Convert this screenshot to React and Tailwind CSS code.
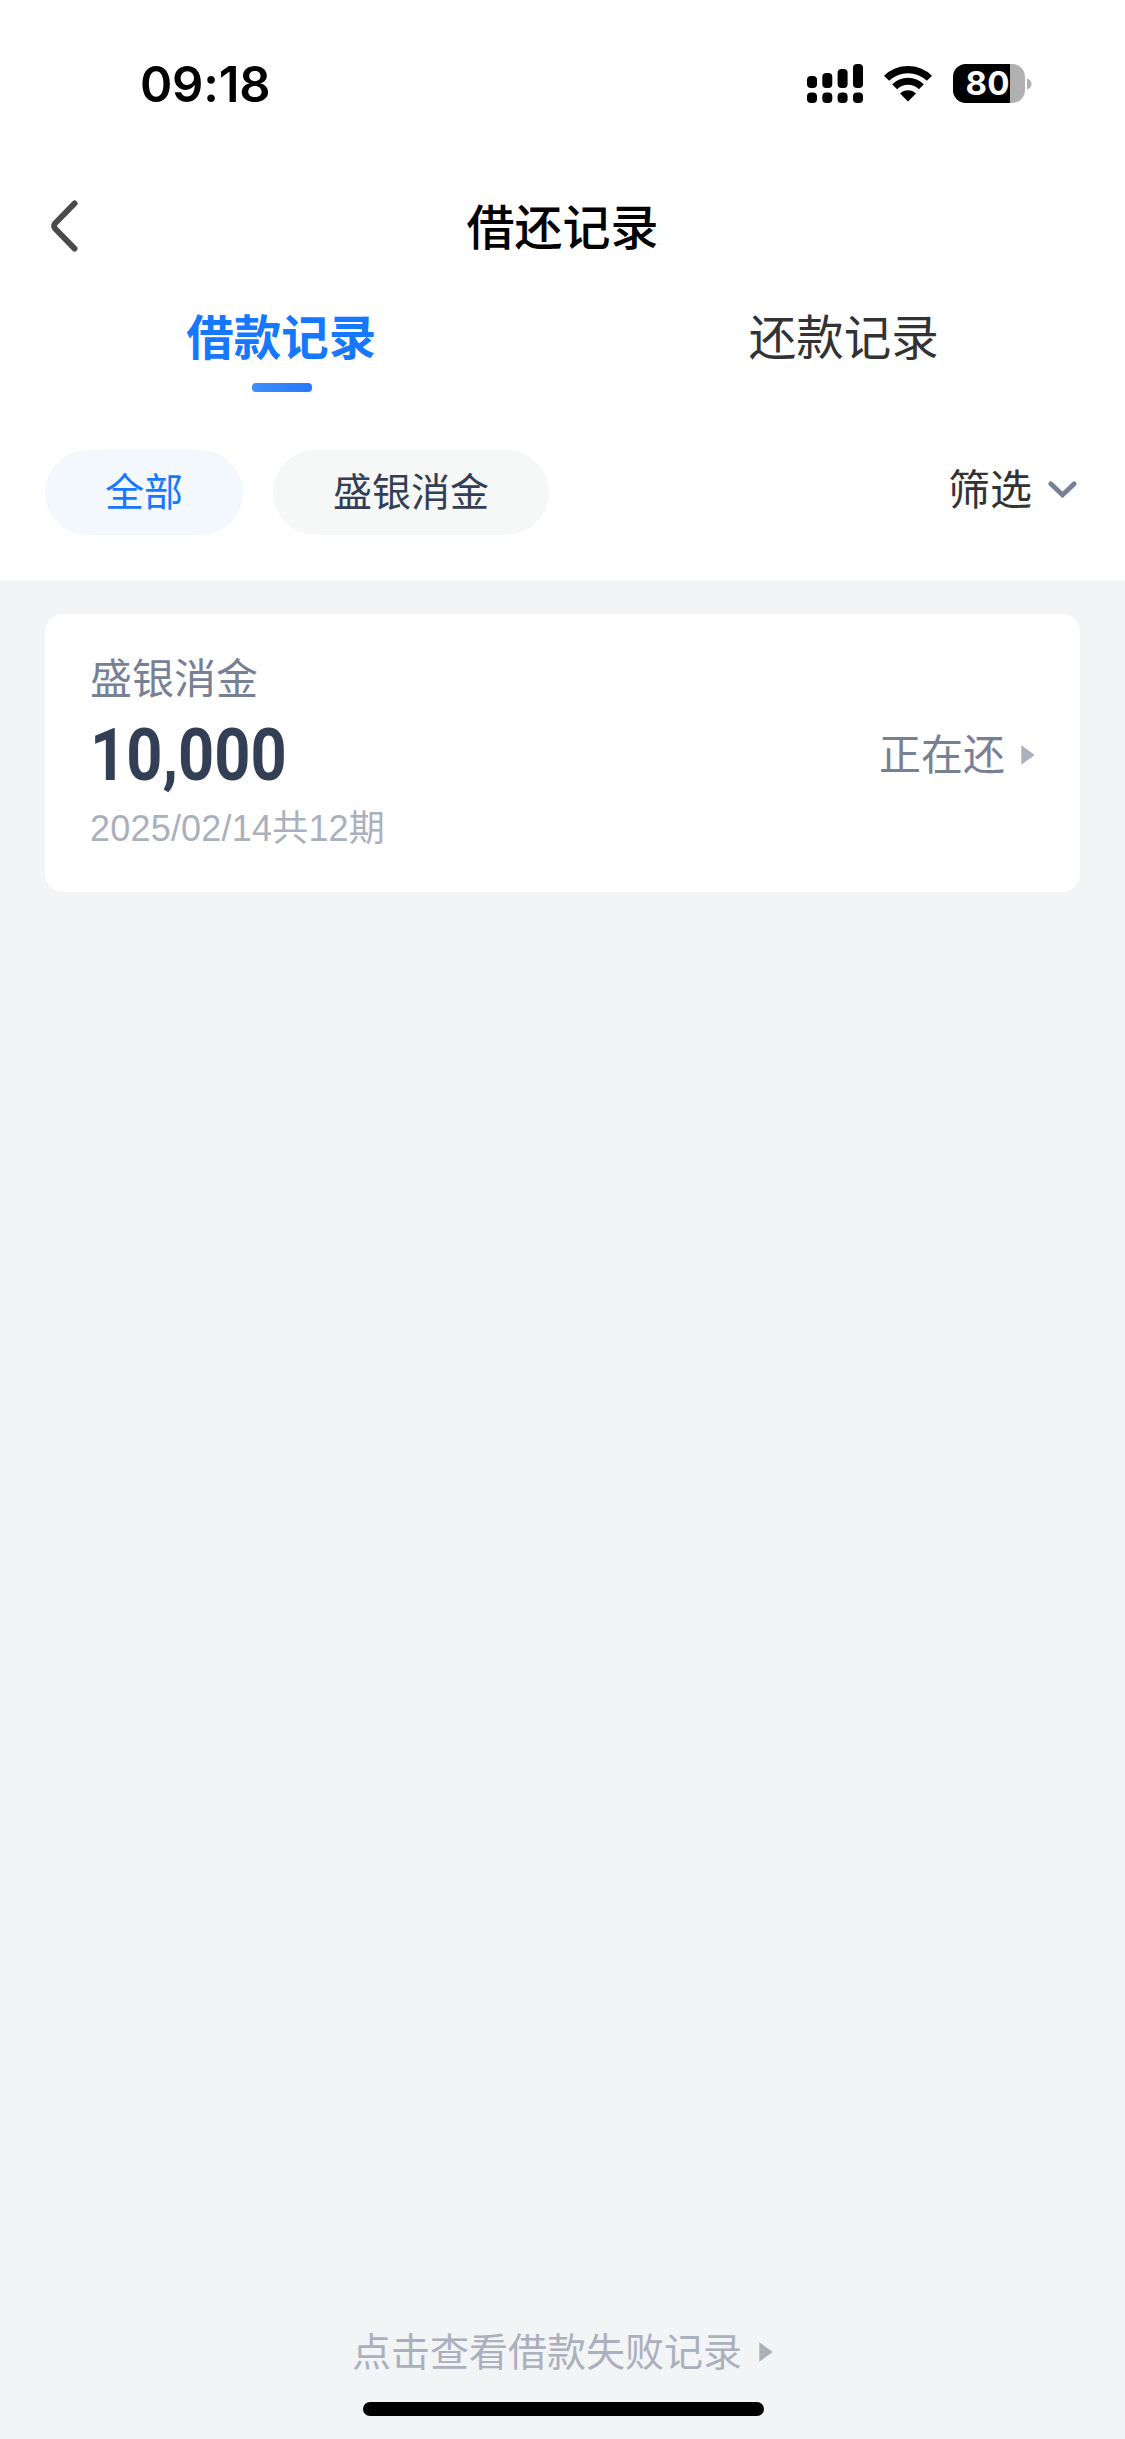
import React, { useState } from 'react';

const tabs = ['借款记录', '还款记录'];
const filters = ['全部', '盛银消金'];

/**
 * Barra de estado del teléfono
 */
function StatusBar() {
    return (
        <div className="flex h-[168px] items-start justify-between pl-[140px] pr-[93px] pt-[60px]">
            <span className="pt-px font-['Inter'] text-[49px] font-semibold leading-[48px] tracking-[-0.2px] text-black">
                09:18
            </span>
            <div className="flex items-center pt-[4px]">
                {/* Signal */}
                <svg className="h-[39px] w-[56px]" viewBox="0 0 56 39" fill="#000">
                    <rect x="0" y="12" width="10" height="12" rx="4" />
                    <rect x="15.3" y="9" width="10" height="15" rx="4" />
                    <rect x="30.6" y="5" width="10" height="19" rx="4" />
                    <rect x="46" y="0" width="10" height="24" rx="4" />
                    <rect x="0" y="28.5" width="10" height="10.5" rx="4" />
                    <rect x="15.3" y="28.5" width="10" height="10.5" rx="4" />
                    <rect x="30.6" y="28.5" width="10" height="10.5" rx="4" />
                    <rect x="46" y="28.5" width="10" height="10.5" rx="4" />
                </svg>
                {/* Wifi */}
                <svg className="ml-[21px] h-[39px] w-[48px]" viewBox="0 0 48 39">
                    <path d="M2.6 14.3 A30.5 30.5 0 0 1 45.4 14.3" fill="none" stroke="#000" strokeWidth="7.2" />
                    <path d="M10.6 22.8 A19 19 0 0 1 37.4 22.8" fill="none" stroke="#000" strokeWidth="7" />
                    <path d="M24 37.4 L16 29.6 A11 11 0 0 1 32 29.6 Z" fill="#000" />
                </svg>
                {/* Battery */}
                <div className="ml-[21px] flex h-[39px] w-[72px] overflow-hidden rounded-[13px] bg-[#b0b0b0]">
                    <div className="flex w-[57px] items-center justify-end bg-black font-['Inter'] text-[33px] font-bold leading-none tracking-[0.4px] text-white">
                        80
                    </div>
                </div>
                <svg className="ml-[2px] h-[12px] w-[5px]" viewBox="0 0 5 12">
                    <path d="M0 0.5 C6 2.5 6 9.5 0 11.5 Z" fill="#b0b0b0" />
                </svg>
            </div>
        </div>
    );
}

/**
 * Flecha pequeña usada en la tarjeta y en el pie
 */
function Arrow({ className }) {
    return (
        <svg className={`h-[20px] w-[14px] ${className}`} viewBox="0 0 14 20">
            <path d="M0.3 0.3 L13.7 10 L0.3 19.7 Z" fill="#abb0bd" />
        </svg>
    );
}

function Header() {
    return (
        <header className="grid h-[117px] grid-cols-[1fr_auto_1fr] items-center px-[51px]">
            <button aria-label="返回" className="w-[27px] pb-[2px]">
                <svg className="h-[52px] w-[27px]" viewBox="0 0 27 52" fill="none">
                    <path
                        d="M23.6 3.4 L4.2 23.2 Q2 26 4.2 28.8 L23.6 48.6"
                        stroke="#4a4a4a"
                        strokeWidth="5.8"
                        strokeLinecap="round"
                        strokeLinejoin="round"
                    />
                </svg>
            </button>
            <h1 className="pb-[6px] text-[48px] font-medium leading-[68px] text-black">借还记录</h1>
        </header>
    );
}

function Tabs({ active, onChange }) {
    return (
        <nav className="grid h-[125px] grid-cols-2">
            {tabs.map((tab, i) => (
                <button key={tab} onClick={() => onChange(i)} className="flex flex-col items-center pt-[16px]">
                    <span
                        className={`text-[47.5px] leading-[68px] ${active === i ? 'font-bold text-[#1677ff]' : 'text-[#333333]'}`}
                    >
                        {tab}
                    </span>
                    {active === i && (
                        <span className="ml-px mt-[14px] h-[9px] w-[60px] rounded-[4px] bg-linear-to-r from-[#3d8eff] to-[#2878ff]" />
                    )}
                </button>
            ))}
        </nav>
    );
}

function Filters({ active, onChange }) {
    return (
        <div className="flex h-[171px] items-start justify-between pl-[45px] pr-[48px] pt-[40px]">
            <div className="flex gap-[30px]">
                {filters.map((item, i) => (
                    <button
                        key={item}
                        onClick={() => onChange(i)}
                        className={`h-[85px] rounded-full px-[60px] pb-[6px] text-[39px] leading-[79px] ${
                            active === i ? 'bg-[#f3f8ff] text-[#1677ff]' : 'bg-[#f6f8f8] text-[#333f55]'
                        }`}
                    >
                        {item}
                    </button>
                ))}
            </div>
            <button className="flex items-center text-[42px] leading-[74px] text-[#333333]">
                <span className="pb-[2px]">筛选</span>
                <svg className="ml-[16px] mt-[3px] h-[18px] w-[29px]" viewBox="0 0 29 18" fill="none">
                    <path d="M2.8 2.8 L14.5 14 L26.2 2.8" stroke="#778196" strokeWidth="4.8" strokeLinecap="round" />
                </svg>
            </button>
        </div>
    );
}

/**
 * Tarjeta de un préstamo
 */
function LoanCard({ name, amount, detail, status }) {
    return (
        <div className="mx-[45px] flex h-[278px] items-center justify-between rounded-[18px] bg-white px-[45px]">
            <div className="flex h-full flex-col items-start pt-[32px]">
                <div className="text-[42px] leading-[60px] text-[#778196]">{name}</div>
                <div className="mt-[4px] origin-left scale-x-[0.865] font-['Roboto'] text-[73px] font-bold leading-[90px] text-[#333f55]">
                    {amount}
                </div>
                <div className="mt-[2px] font-['Liberation_Sans','Noto_Sans_CJK_SC',sans-serif] text-[36px] leading-[54px] tracking-[0.2px] text-[#abb0bd]">
                    {detail}
                </div>
            </div>
            <div className="flex items-center text-[42px] leading-[60px] text-[#778196]">
                <span className="pb-[3px]">{status}</span>
                <Arrow className="ml-[16px] mt-[3px]" />
            </div>
        </div>
    );
}

export default function App() {
    const [tab, setTab] = useState(0);
    const [filter, setFilter] = useState(0);

    return (
        <div className="flex h-[2439px] w-[1125px] flex-col bg-[#f3f4f6] font-['Noto_Sans_CJK_SC',sans-serif]">
            <div className="h-[581px] bg-white">
                <StatusBar />
                <Header />
                <Tabs active={tab} onChange={setTab} />
                <Filters active={filter} onChange={setFilter} />
            </div>

            <main className="flex-1 pt-[33px]">
                <LoanCard name="盛银消金" amount="10,000" detail="2025/02/14共12期" status="正在还" />
            </main>

            <footer className="flex flex-col items-center pb-[23px]">
                <button className="flex items-center text-[39px] leading-[56px] text-[#abb0bd]">
                    <span className="pb-[5px]">点击查看借款失败记录</span>
                    <Arrow className="ml-[17px]" />
                </button>
                <div className="ml-px mt-[20px] h-[14px] w-[401px] rounded-full bg-black" />
            </footer>
        </div>
    );
}
